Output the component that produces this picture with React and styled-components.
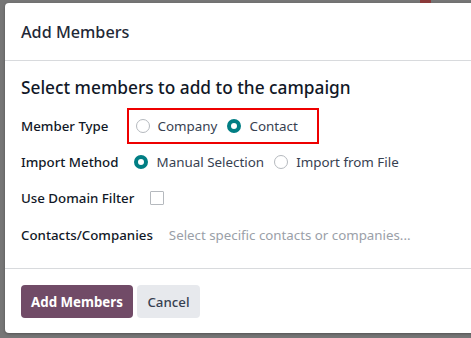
import React from "react";
import styled, { createGlobalStyle } from "styled-components";

const Global = createGlobalStyle`
  html, body { margin: 0; padding: 0; }
  body {
    background: #767676;
    overflow: hidden;
    width: 471px;
    height: 338px;
    font-family: "Noto Sans", "Liberation Sans", sans-serif;
    color: #1f2937;
  }
`;

const Backdrop = styled.div`
  position: relative;
  width: 471px;
  height: 338px;
  overflow: hidden;
  padding: 3px 0 0 5px;
  box-sizing: border-box;
`;

const PageHint = styled.div`
  position: absolute;
  top: 0;
  left: 420px;
  width: 11px;
  height: 3px;
  background: #8a3a3a;
`;

const Modal = styled.div`
  width: 520px;
  height: 330px;
  background: #fff;
  border-radius: 4px 0 0 4px;
  display: flex;
  flex-direction: column;
  box-shadow: 0 1px 3px rgba(0,0,0,0.3);
`;

const Header = styled.div`
  height: 57px;
  display: flex;
  align-items: center;
  padding: 0 16px;
  border-bottom: 1px solid #d8dadd;
`;

const Title = styled.h4`
  margin: 0;
  font-size: 16.2px;
  font-weight: 500;
  color: #1f2937;
`;

const Body = styled.div`
  flex: 1;
  padding: 15px 16px 0;
  border-bottom: 1px solid #d8dadd;
`;

const Heading = styled.h3`
  margin: 0 0 8px;
  font-size: 17.3px;
  line-height: 24px;
  font-weight: 500;
  color: #111827;
`;

const Row = styled.div`
  display: flex;
  align-items: center;
  gap: ${(p) => p.$gap ?? 16}px;
  height: ${(p) => p.$h}px;
`;

const Label = styled.span`
  font-size: 13.3px;
  font-weight: 500;
  color: #111827;
  white-space: nowrap;
`;

const Options = styled.div`
  display: flex;
  align-items: center;
  gap: 10px;
  height: 36px;
  box-sizing: border-box;
  padding: ${(p) => (p.$boxed ? "0 19px 0 7px" : "0")};
  border: ${(p) => (p.$boxed ? "2px solid #ee0000" : "none")};
`;

const Option = styled.label`
  display: flex;
  align-items: center;
  gap: 8px;
  font-size: 13.4px;
  color: #374151;
  white-space: nowrap;
`;

const Radio = styled.span`
  width: 14px;
  height: 14px;
  border-radius: 50%;
  box-sizing: border-box;
  border: ${(p) => (p.$on ? "4px solid #017e84" : "1px solid #b5b9be")};
  background: #fff;
  flex: none;
`;

const Check = styled.span`
  width: 14px;
  height: 14px;
  box-sizing: border-box;
  border: 1px solid #b5b9be;
  border-radius: 1px;
  background: #fff;
`;

const Placeholder = styled.span`
  font-size: 13.3px;
  color: #9aa0a8;
  white-space: nowrap;
`;

const Footer = styled.div`
  display: flex;
  gap: 4px;
  padding: 16px 16px 15px;
`;

const Button = styled.button`
  height: 33px;
  border: none;
  border-radius: 4px;
  padding: 0;
  width: ${(p) => p.$w}px;
  font-family: inherit;
  font-size: 13.3px;
  font-weight: ${(p) => (p.$primary ? 700 : 500)};
  background: ${(p) => (p.$primary ? "#714b67" : "#e7e9ed")};
  color: ${(p) => (p.$primary ? "#fff" : "#374151")};
`;

export default function App() {
  return (
    <Backdrop>
      <Global />
      <PageHint />
      <Modal>
        <Header>
          <Title>Add Members</Title>
        </Header>
        <Body>
          <Heading>Select members to add to the campaign</Heading>
          <Row $h={36} $gap={18}>
            <Label>Member Type</Label>
            <Options $boxed>
              <Option><Radio />Company</Option>
              <Option><Radio $on />Contact</Option>
            </Options>
          </Row>
          <Row $h={35}>
            <Label>Import Method</Label>
            <Options>
              <Option><Radio $on />Manual Selection</Option>
              <Option><Radio />Import from File</Option>
            </Options>
          </Row>
          <Row $h={38}>
            <Label>Use Domain Filter</Label>
            <Check />
          </Row>
          <Row $h={36}>
            <Label>Contacts/Companies</Label>
            <Placeholder>Select specific contacts or companies...</Placeholder>
          </Row>
        </Body>
        <Footer>
          <Button $primary $w={112}>Add Members</Button>
          <Button $w={63}>Cancel</Button>
        </Footer>
      </Modal>
    </Backdrop>
  );
}
